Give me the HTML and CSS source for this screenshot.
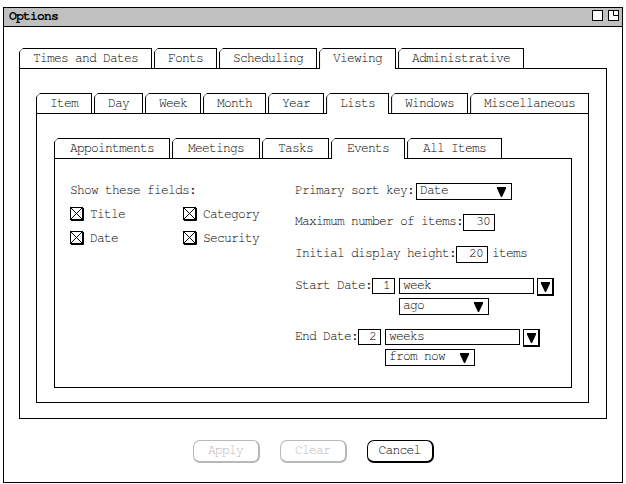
FILE: index.html
```html
<!DOCTYPE html>
<html>
<head>
<meta charset="utf-8">
<link rel="stylesheet" href="styles.css">
</head>
<body>
<div class="window">
  <div class="titlebar">
    <span class="title">Options</span>
    <span class="ticons">
      <svg class="ticon" viewBox="0 0 11 11"><rect x="0.5" y="0.5" width="10" height="10" fill="#fff" stroke="#000"/></svg>
      <svg class="ticon" viewBox="0 0 11 11"><rect x="0.5" y="0.5" width="10" height="10" fill="#fff" stroke="#000"/><path d="M5.5 0.5V5.5H10.5" fill="none" stroke="#000"/></svg>
    </span>
  </div>
  <div class="body">
    <div class="tabs t1">
      <div class="tab"><span>Times and Dates</span></div>
      <div class="tab"><span>Fonts</span></div>
      <div class="tab"><span>Scheduling</span></div>
      <div class="tab sel"><span>Viewing</span></div>
      <div class="tab"><span>Administrative</span></div>
    </div>
    <div class="panel p1">
      <div class="tabs t2">
        <div class="tab"><span>Item</span></div>
        <div class="tab"><span>Day</span></div>
        <div class="tab"><span>Week</span></div>
        <div class="tab"><span>Month</span></div>
        <div class="tab"><span>Year</span></div>
        <div class="tab sel"><span>Lists</span></div>
        <div class="tab"><span>Windows</span></div>
        <div class="tab"><span>Miscellaneous</span></div>
      </div>
      <div class="panel p2">
        <div class="tabs t3">
          <div class="tab"><span>Appointments</span></div>
          <div class="tab"><span>Meetings</span></div>
          <div class="tab"><span>Tasks</span></div>
          <div class="tab sel"><span>Events</span></div>
          <div class="tab"><span>All Items</span></div>
        </div>
        <div class="panel p3">
          <div class="leftcol">
            <div class="lbl">Show these fields:</div>
            <div class="checks">
              <div class="check"><svg class="cb" viewBox="0 0 14 14"><rect x="0.5" y="0.5" width="12" height="12" fill="#fff" stroke="#000"/><path d="M13.5 1V13.5H1" fill="none" stroke="#000"/><path d="M1 1L12 12M12 1L1 12" stroke="#000" stroke-width="1"/></svg><span>Title</span></div>
              <div class="check"><svg class="cb" viewBox="0 0 14 14"><rect x="0.5" y="0.5" width="12" height="12" fill="#fff" stroke="#000"/><path d="M13.5 1V13.5H1" fill="none" stroke="#000"/><path d="M1 1L12 12M12 1L1 12" stroke="#000" stroke-width="1"/></svg><span>Category</span></div>
              <div class="check"><svg class="cb" viewBox="0 0 14 14"><rect x="0.5" y="0.5" width="12" height="12" fill="#fff" stroke="#000"/><path d="M13.5 1V13.5H1" fill="none" stroke="#000"/><path d="M1 1L12 12M12 1L1 12" stroke="#000" stroke-width="1"/></svg><span>Date</span></div>
              <div class="check"><svg class="cb" viewBox="0 0 14 14"><rect x="0.5" y="0.5" width="12" height="12" fill="#fff" stroke="#000"/><path d="M13.5 1V13.5H1" fill="none" stroke="#000"/><path d="M1 1L12 12M12 1L1 12" stroke="#000" stroke-width="1"/></svg><span>Security</span></div>
            </div>
          </div>
          <div class="rightcol">
            <div class="row r-sort">
              <span class="lbl">Primary sort key:</span>
              <div class="dropdown dd-sort"><span>Date</span><svg class="arrow" viewBox="0 0 9 10"><path d="M0 0H9V1.5L5 10H4L0 1.5Z" fill="#000"/></svg></div>
            </div>
            <div class="row r-max">
              <span class="lbl">Maximum number of items:</span>
              <div class="num">30</div>
            </div>
            <div class="row r-init">
              <span class="lbl">Initial display height:</span>
              <div class="num">20</div>
              <span class="lbl unit">items</span>
            </div>
            <div class="row r-start">
              <span class="lbl">Start Date:</span>
              <div class="num small">1</div>
              <div class="dcol">
                <div class="drow">
                  <div class="field">week</div>
                  <div class="abtn"><svg class="arrow" viewBox="0 0 9 10"><path d="M0 0H9V1.5L5 10H4L0 1.5Z" fill="#000"/></svg></div>
                </div>
                <div class="dropdown dd-rel"><span>ago</span><svg class="arrow" viewBox="0 0 9 10"><path d="M0 0H9V1.5L5 10H4L0 1.5Z" fill="#000"/></svg></div>
              </div>
            </div>
            <div class="row r-end">
              <span class="lbl">End Date:</span>
              <div class="num small">2</div>
              <div class="dcol">
                <div class="drow">
                  <div class="field">weeks</div>
                  <div class="abtn"><svg class="arrow" viewBox="0 0 9 10"><path d="M0 0H9V1.5L5 10H4L0 1.5Z" fill="#000"/></svg></div>
                </div>
                <div class="dropdown dd-rel"><span>from now</span><svg class="arrow" viewBox="0 0 9 10"><path d="M0 0H9V1.5L5 10H4L0 1.5Z" fill="#000"/></svg></div>
              </div>
            </div>
          </div>
        </div>
      </div>
    </div>
    <div class="buttons">
      <div class="btn disabled">Apply</div>
      <div class="btn disabled">Clear</div>
      <div class="btn">Cancel</div>
    </div>
  </div>
</div>
</body>
</html>
```
FILE: styles.css
```css
* { box-sizing: border-box; }
html, body { margin: 0; padding: 0; background: #fff; }
body {
  font-family: "Nimbus Mono PS", "Nimbus Mono L", "FreeMono", "Liberation Mono", "DejaVu Sans Mono", monospace;
  font-size: 13px;
  letter-spacing: -0.8px;
  color: #000;
}
.window {
  margin: 7px 0 0 3px;
  width: 620px;
  height: 476px;
  border: 1px solid #000;
  display: flex;
  flex-direction: column;
}
.titlebar {
  height: 19px;
  background: #c0c0c0;
  border-bottom: 1px solid #000;
  display: flex;
  justify-content: space-between;
  align-items: flex-start;
  padding: 0 3px 0 5px;
}
.title { font-weight: bold; line-height: 18px; }
.ticons { display: flex; gap: 5px; padding-top: 2px; }
.ticon { width: 11px; height: 11px; display: block; }

.body { padding: 21px 15px 0 15px; }

.tabs { display: flex; gap: 2px; height: 20px; align-items: flex-end; }
.tab {
  height: 20px;
  background: #000;
  padding: 1px 1px 0 1px;
  clip-path: polygon(0 4px, 4px 0, 100% 0, 100% 100%, 0 100%);
}
.tab span {
  display: block;
  height: 19px;
  line-height: 19px;
  background: #fff;
  padding: 0 13px;
  white-space: nowrap;
  clip-path: polygon(0 2.5px, 2.5px 0, 100% 0, 100% 100%, 0 100%);
}
.tab.sel { height: 21px; margin-bottom: -1px; position: relative; z-index: 1; }
.tab.sel span { height: 20px; }
.t3 .tab span { padding: 0 15px; }

.panel { border: 1px solid #000; background: #fff; }
.p1 { height: 351px; padding: 24px 17px 15px 16px; }
.p2 { height: 290px; padding: 24px 16px 14px 17px; }
.p3 {
  height: 230px;
  padding: 24px 0 0 15px;
  display: grid;
  grid-template-columns: 225px 1fr;
  align-items: start;
}

.lbl { line-height: 14px; padding-top: 1px; white-space: nowrap; }
.checks {
  margin-top: 9px;
  display: grid;
  grid-template-columns: 113px auto;
  row-gap: 10px;
}
.check { display: flex; align-items: flex-start; gap: 6px; height: 14px; line-height: 14px; }
.check span { padding-top: 1px; }
.cb { width: 14px; height: 14px; display: block; flex: none; }

.rightcol { display: flex; flex-direction: column; }
.row { display: flex; align-items: flex-start; }
.r-max { margin-top: 14px; }
.r-init { margin-top: 15px; }
.r-start { margin-top: 15px; }
.r-end { margin-top: 14px; }

.dropdown {
  height: 17px;
  border: 1px solid #000;
  display: flex;
  justify-content: space-between;
  align-items: flex-start;
  padding: 0 5px 0 3px;
  line-height: 14px;
}
.dropdown .arrow { align-self: center; }
.dd-sort { width: 96px; margin-left: 2px; }
.dd-rel { width: 90px; }
.arrow { width: 9px; height: 10px; display: block; flex: none; }

.num {
  width: 32px;
  height: 17px;
  border: 1px solid #000;
  text-align: right;
  padding-right: 4px;
  line-height: 14px;
}
.num.small { width: 23px; height: 16px; line-height: 13px; }
.unit { margin-left: 4px; }

.dcol { display: flex; flex-direction: column; gap: 2px; margin-left: 4px; }
.drow { display: flex; align-items: flex-start; }
.field {
  width: 135px;
  height: 16px;
  border: 1px solid #000;
  padding-left: 3px;
  line-height: 13px;
}
.abtn {
  margin-left: 3px;
  width: 17px;
  height: 18px;
  border: 1px solid #000;
  border-right-width: 2px;
  border-bottom-width: 2px;
  display: flex;
  align-items: center;
  justify-content: center;
}

.buttons {
  margin-top: 21px;
  display: flex;
  justify-content: center;
  gap: 20px;
}
.btn {
  width: 67px;
  height: 23px;
  border: 1px solid #000;
  border-right-width: 2px;
  border-bottom-width: 2px;
  border-radius: 7px;
  text-align: center;
  line-height: 20px;
}
.btn.disabled { color: #b8b8b8; border-color: #b8b8b8; }
```
